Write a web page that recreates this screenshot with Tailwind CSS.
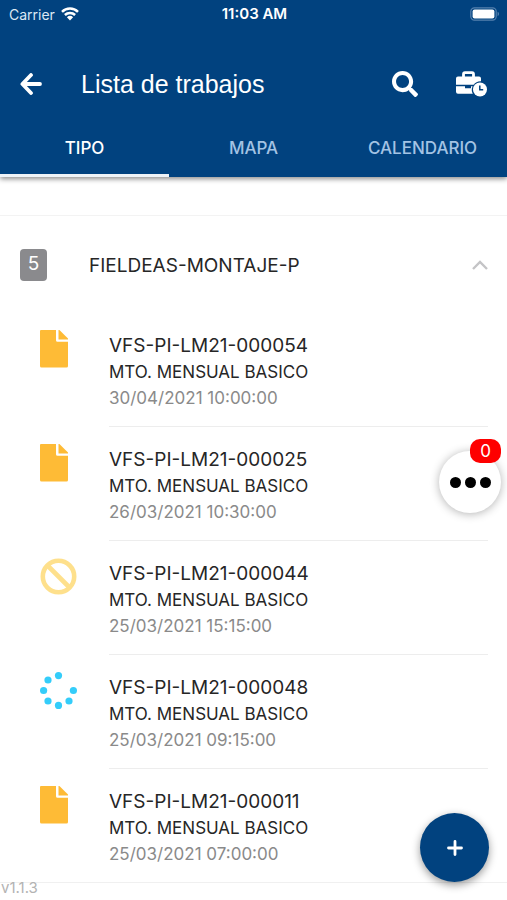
<!DOCTYPE html>
<html lang="es">
<head>
  <meta charset="UTF-8" />
  <meta name="viewport" content="width=device-width, initial-scale=1.0"/>
  <title>Lista de trabajos</title>
  <script src="https://cdn.jsdelivr.net/npm/@tailwindcss/browser@4"></script>
</head>
<body class="bg-white text-[#262626] font-['Inter',sans-serif]">

  <div class="relative h-screen flex flex-col overflow-hidden">

    <header class="relative z-10 shrink-0 bg-[#01427f] text-white shadow-[0_2px_5px_rgba(0,0,0,0.45)]">
      <!-- Status bar -->
      <div class="grid grid-cols-3 items-center h-7 pl-[9px] pr-[7px] text-[15px]">
        <div class="flex items-center gap-[6px] text-[14px] text-[#dce8f4]">
          <span>Carrier</span>
          <svg class="w-[18px] h-[14px]" viewBox="0 0 18 14" fill="none" stroke="#fff" stroke-width="2.5">
            <path d="M1 4.9a11.4 11.4 0 0 1 16 0" />
            <path d="M3.9 8a7.3 7.3 0 0 1 10.2 0" />
            <path d="M9 13.4 5.9 10.2a4.5 4.5 0 0 1 6.2 0z" fill="#fff" stroke="none" />
          </svg>
        </div>
        <div class="text-center font-semibold">11:03 AM</div>
        <svg class="justify-self-end w-[30px] h-[14px]" viewBox="0 0 30 14">
          <rect x="0.8" y="0.8" width="25.4" height="12.4" rx="3.6" fill="none" stroke="#5581ae" stroke-width="1.2" />
          <rect x="2.6" y="2.6" width="21.8" height="8.8" rx="2" fill="#fff" />
          <path d="M27.6 4.8v4.4a2.4 2.4 0 0 0 0-4.4z" fill="#5581ae" />
        </svg>
      </div>

      <!-- Toolbar -->
      <div class="flex items-center h-[92px] pt-5 pl-5 pr-[19px]">
        <button type="button" aria-label="Volver">
          <svg class="w-[23px] h-[22px]" viewBox="0 0 23 22" fill="none" stroke="#fff" stroke-width="3.8" stroke-linecap="round" stroke-linejoin="round">
            <path d="M11 2 2.4 11l8.6 9M3 11h17" />
          </svg>
        </button>
        <h1 class="ml-[38px] text-[25px] leading-8 font-['Liberation_Sans',sans-serif]">Lista de trabajos</h1>
        <button type="button" aria-label="Buscar" class="ml-auto">
          <svg class="w-[26px] h-[26px]" viewBox="0 0 512 512" fill="#fff">
            <path d="M505 442.7L405.3 343c-4.5-4.5-10.6-7-17-7H372c27.6-35.3 44-79.7 44-128C416 93.1 322.9 0 208 0S0 93.1 0 208s93.1 208 208 208c48.3 0 92.7-16.4 128-44v16.3c0 6.4 2.5 12.5 7 17l99.7 99.7c9.4 9.4 24.6 9.4 33.9 0l28.3-28.3c9.4-9.4 9.4-24.6.1-34zM208 336c-70.7 0-128-57.2-128-128 0-70.7 57.2-128 128-128 70.7 0 128 57.2 128 128 0 70.7-57.2 128-128 128z" />
          </svg>
        </button>
        <button type="button" aria-label="Trabajos pendientes" class="ml-[37px]">
          <svg class="w-[33px] h-[26px]" viewBox="0 0 33 26">
            <path d="M8.500 6V3.200a1.500 1.500 0 0 1 1.500-1.500h7a1.500 1.500 0 0 1 1.500 1.500V6" fill="none" stroke="#fff" stroke-width="2.8" />
            <path d="M3 5.500h21a2 2 0 0 1 2 2v2.700a8.400 8.400 0 0 0-7.400 3.600H1V7.500a2 2 0 0 1 2-2z" fill="#fff" />
            <path d="M1 15.200h9v2h6v-2h1.600a8.500 8.500 0 0 0 .2 7.600H3a2 2 0 0 1-2-2z" fill="#fff" />
            <circle cx="25" cy="18.500" r="7" fill="#fff" />
            <path d="M24.800 14.500v4.300h3.400" fill="none" stroke="#01427f" stroke-width="1.5" />
          </svg>
        </button>
      </div>

      <nav class="grid grid-cols-3 h-[57px] text-[17px] font-medium">
        <a href="#tipo" class="flex items-center justify-center pt-[3px] border-b-[3px] border-[#eef3f8]">TIPO</a>
        <a href="#mapa" class="flex items-center justify-center text-[#a3c3e4]">MAPA</a>
        <a href="#calendario" class="flex items-center justify-center text-[#a3c3e4]">CALENDARIO</a>
      </nav>
    </header>

    <main class="flex-1 min-h-0 overflow-hidden">
      <div class="h-[39px] border-b border-[#f3f3f3]"></div>

      <button type="button" aria-expanded="true" class="w-full flex items-center h-[97px] pl-5 pr-[19px] text-[19px]">
        <span class="w-[27px] h-8 rounded-[4px] bg-[#8a8a8d] text-white flex items-center justify-center">5</span>
        <span class="ml-[42px] pt-1">FIELDEAS-MONTAJE-P</span>
        <svg class="ml-auto w-4 h-[10px]" viewBox="0 0 16 10" fill="none" stroke="#c4c4c6" stroke-width="2.4">
          <path d="M1 9l7-7 7 7" />
        </svg>
      </button>

      <ul id="jobList" class="border-b border-[#f0f0f0]"></ul>
    </main>

    <footer class="absolute bottom-[2px] left-px text-[15px] leading-5 text-[#b3b3b3]">v1.1.3</footer>

    <!-- Floating buttons -->
    <button type="button" aria-label="Mensajes" class="absolute top-[451px] right-[6px] w-[62px] h-[62px] rounded-full bg-white shadow-[0_1px_10px_rgba(0,0,0,0.3)] flex items-center justify-center gap-1">
      <span class="w-[11px] h-[11px] rounded-full bg-black"></span>
      <span class="w-[11px] h-[11px] rounded-full bg-black"></span>
      <span class="w-[11px] h-[11px] rounded-full bg-black"></span>
      <span class="absolute -top-3 right-0 w-[31px] h-6 rounded-[10px] bg-[#fe0000] text-white text-[17px] leading-6 text-center">0</span>
    </button>
    <button type="button" aria-label="Nuevo trabajo" class="absolute bottom-[18px] right-[18px] w-[69px] h-[69px] rounded-full bg-[#01427f] shadow-[0_3px_9px_rgba(0,0,0,0.4)] flex items-center justify-center">
      <svg class="w-4 h-4" viewBox="0 0 16 16" fill="none" stroke="#fff" stroke-width="2.8" stroke-linecap="round">
        <path d="M8 1.500v13M1.500 8h13" />
      </svg>
    </button>
  </div>

  <script>
    const jobs = [
      { code: "VFS-PI-LM21-000054", date: "30/04/2021 10:00:00", icon: "file" },
      { code: "VFS-PI-LM21-000025", date: "26/03/2021 10:30:00", icon: "file" },
      { code: "VFS-PI-LM21-000044", date: "25/03/2021 15:15:00", icon: "ban" },
      { code: "VFS-PI-LM21-000048", date: "25/03/2021 09:15:00", icon: "spinner" },
      { code: "VFS-PI-LM21-000011", date: "25/03/2021 07:00:00", icon: "file" }
    ];

    const icons = {
      file: `
        <svg class="w-7 h-[38px]" viewBox="0 0 28 38" fill="#febb36">
          <path d="M1 0h15v10.2a1.6 1.6 0 0 0 1.6 1.600H28V36a1.5 1.5 0 0 1-1.5 1.500h-25A1.5 1.5 0 0 1 0 36V1a1 1 0 0 1 1-1z" />
          <path d="M18.500 0h.9L28 8.400v1H18.500z" />
        </svg>`,
      ban: `
        <svg class="w-[37px] h-[37px]" viewBox="0 0 37 37" fill="none" stroke="#fee08c" stroke-width="4.600">
          <circle cx="18.500" cy="18.500" r="15.700" />
          <path d="M7.500 7.500l22 22" />
        </svg>`,
      spinner: `
        <svg class="w-[37px] h-[37px]" viewBox="0 0 37 37" fill="#34cdfa">
          <circle cx="18.500" cy="3.600" r="3.600" />
          <circle cx="8" cy="8" r="3.600" />
          <circle cx="3.600" cy="18.500" r="3.600" />
          <circle cx="8" cy="29" r="3.600" />
          <circle cx="18.500" cy="33.400" r="3.600" />
          <circle cx="29" cy="29" r="3.600" />
          <circle cx="33.400" cy="18.500" r="3.600" />
        </svg>`
    };

    document.getElementById("jobList").innerHTML = jobs.map(job => `
      <li class="group flex pl-10 pr-[19px]">
        <div class="w-[69px] shrink-0 pt-[17px]">${icons[job.icon]}</div>
        <div class="flex-1 h-[114px] pt-5 border-b border-[#ededed] group-last:h-[113px] group-last:border-b-0">
          <div class="text-[19px] leading-[26px]">${job.code}</div>
          <div class="text-[17px] leading-[26px]">MTO. MENSUAL BASICO</div>
          <div class="text-[17px] leading-[26px] text-[#8a8a8a]">${job.date}</div>
        </div>
      </li>
    `).join('');
  </script>
</body>
</html>
